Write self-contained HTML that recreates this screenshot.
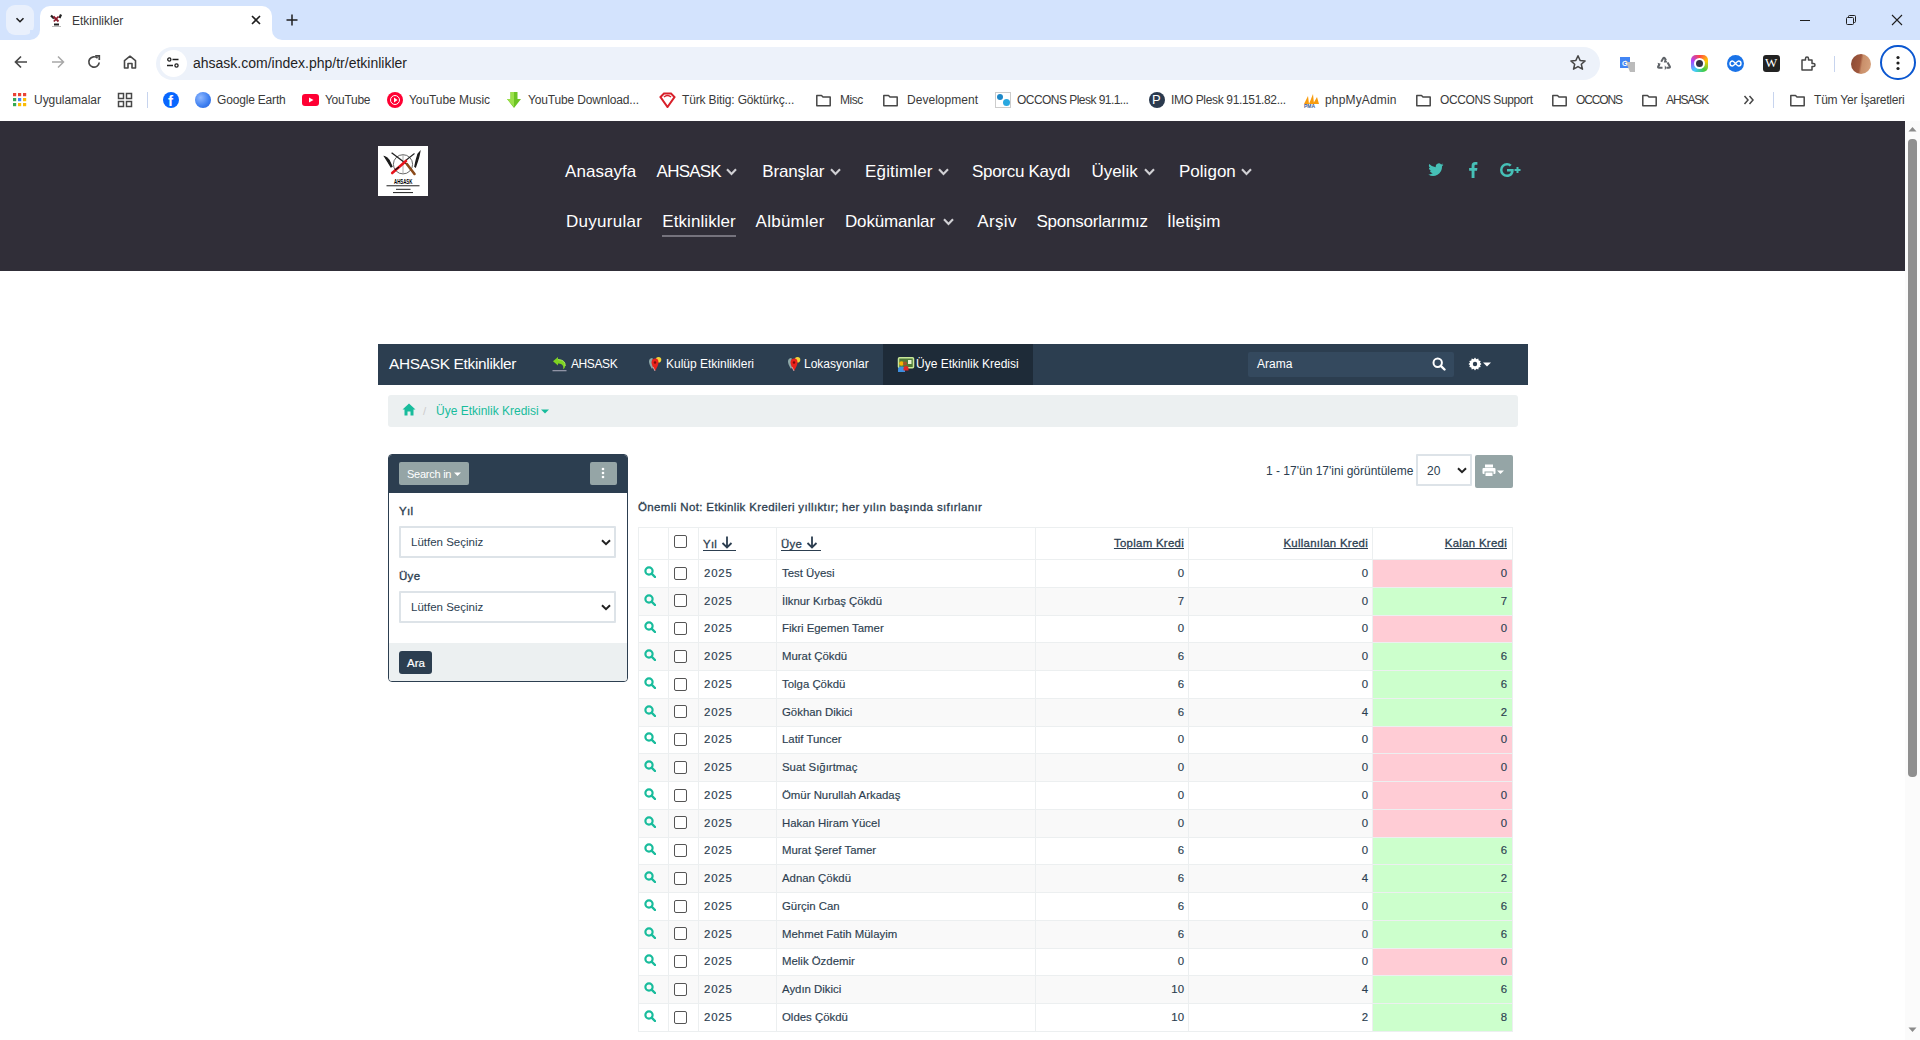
<!DOCTYPE html>
<html><head><meta charset="utf-8"><style>
*{box-sizing:border-box;margin:0;padding:0}
html,body{width:1920px;height:1040px;overflow:hidden;background:#fff;font-family:"Liberation Sans",sans-serif}
.abs{position:absolute}
#tabs{position:absolute;left:0;top:0;width:1920px;height:40px;background:#d3e3fd}
#toolbar{position:absolute;left:0;top:40px;width:1920px;height:40px;background:#fff;border-top-left-radius:8px}
#bm{position:absolute;left:0;top:80px;width:1920px;height:41px;background:#fff}
#page{position:absolute;left:0;top:121px;width:1905px;height:919px;background:#fff;overflow:hidden;color:#2c3e50}
#sb{position:absolute;left:1905px;top:121px;width:15px;height:919px;background:#fbfbfb}
.t12{font-size:12px;color:#3a3a3a;white-space:nowrap;line-height:14px}
#hdr{position:absolute;left:0;top:0;width:1905px;height:150px;background:#302e38}
.nav{position:absolute;color:#fff;font-size:17px;white-space:nowrap;line-height:20px}
.chev{position:absolute}
.w{position:absolute;white-space:nowrap}
#enav{position:absolute;left:378px;top:223px;width:1150px;height:41px;background:#2c3e50}
#bc{position:absolute;left:388px;top:274px;width:1130px;height:32px;background:#ecf0f1;border-radius:3px}
#panel{position:absolute;left:388px;top:333px;width:240px;height:228px;border:1px solid #2c3e50;border-radius:4px;overflow:hidden;background:#fff}
.btng{position:absolute;background:#95a5a6;border-radius:2px;color:#fff}
.sel{position:absolute;border:2px solid #dde3e8;border-radius:1px;background:#fff;font-size:11.5px;color:#2c3e50}
table{position:absolute;left:638px;top:406px;width:874px;border-collapse:collapse;font-size:11.4px;color:#2c3e50}
td,th{border:1px solid #eceff0;height:27.75px;padding:0 4px 1px 4px;white-space:nowrap}
th{height:32px;font-weight:normal;-webkit-text-stroke:0.3px #2c3e50;letter-spacing:0.3px;text-decoration:underline;text-align:left}
tr.even td{background:#f9f9f9}
td.c4,td.c5,td.c6,th.c4,th.c5,th.c6{text-align:right}
td.pink{background:#ffccd5 !important}
td.green{background:#ccffcc !important}
.cb{display:inline-block;width:13px;height:13px;margin-left:1px;border:1px solid #555;border-radius:2px;vertical-align:middle;background:#fff}

.ul{display:inline-block;text-decoration:none;border-bottom:1px solid #2c3e50;line-height:13px;height:15px;padding-right:3px}
td.c2{letter-spacing:0.8px}
td{-webkit-text-stroke:0.15px #2c3e50}
td.c2,td.c3{padding-left:5px}
td.c0{padding-left:5px}
td.c6,th.c6{padding-right:5px}

</style></head><body>
<div id="tabs">
  <div class="abs" style="left:6px;top:5px;width:28px;height:30px;border-radius:9px;background:#e9f0fc"></div>
  <svg class="abs" style="left:14px;top:14px" width="12" height="12" viewBox="0 0 12 12"><path d="M2.5 4.2L6 7.7L9.5 4.2" stroke="#1f1f1f" stroke-width="1.6" fill="none"/></svg>
  <div class="abs" style="left:40px;top:6px;width:232px;height:34px;background:#fff;border-radius:10px 10px 0 0"></div>
  <div class="abs" style="left:30px;top:30px;width:10px;height:10px;background:#fff"></div>
  <div class="abs" style="left:30px;top:30px;width:10px;height:10px;background:#d3e3fd;border-radius:0 0 10px 0"></div>
  <div class="abs" style="left:272px;top:30px;width:10px;height:10px;background:#fff"></div>
  <div class="abs" style="left:272px;top:30px;width:10px;height:10px;background:#d3e3fd;border-radius:0 0 0 10px"></div>
  <svg class="abs" style="left:49px;top:13px" width="14" height="14" viewBox="0 0 14 14"><path d="M2 2.5L5 5.5M12 1.5L10.5 5" stroke="#222" stroke-width="2.2"/><path d="M4.5 3.5L9.5 8.5M9.5 3.5L4.8 8.5" stroke="#8b1a2a" stroke-width="1.8"/><rect x="5" y="10.5" width="5" height="2" fill="#222"/><rect x="3" y="13" width="9" height="1" fill="#bbb"/></svg>
  <div class="abs t12" style="left:72px;top:14px">Etkinlikler</div>
  <svg class="abs" style="left:250px;top:14px" width="12" height="12" viewBox="0 0 12 12"><path d="M2 2L10 10M10 2L2 10" stroke="#1f1f1f" stroke-width="1.6"/></svg>
  <svg class="abs" style="left:285px;top:13px" width="14" height="14" viewBox="0 0 14 14"><path d="M7 1.5V12.5M1.5 7H12.5" stroke="#1f1f1f" stroke-width="1.5"/></svg>
  <svg class="abs" style="left:1799px;top:14px" width="12" height="12" viewBox="0 0 12 12"><path d="M1 6.5H11" stroke="#1f1f1f" stroke-width="1"/></svg>
  <svg class="abs" style="left:1845px;top:14px" width="12" height="12" viewBox="0 0 12 12"><rect x="1.5" y="3.5" width="7" height="7" rx="1" fill="none" stroke="#1f1f1f" stroke-width="1"/><path d="M3.5 3.5V2.5a1 1 0 0 1 1-1h5a1 1 0 0 1 1 1v5a1 1 0 0 1-1 1h-1" fill="none" stroke="#1f1f1f" stroke-width="1"/></svg>
  <svg class="abs" style="left:1891px;top:14px" width="12" height="12" viewBox="0 0 12 12"><path d="M1 1L11 11M11 1L1 11" stroke="#1f1f1f" stroke-width="1.1"/></svg>
</div>
<div id="toolbar">
  <svg class="abs" style="left:13px;top:14px" width="16" height="16" viewBox="0 0 16 16"><path d="M14 8H2.5M8 2.5L2.5 8L8 13.5" stroke="#474747" stroke-width="1.7" fill="none"/></svg>
  <svg class="abs" style="left:50px;top:14px" width="16" height="16" viewBox="0 0 16 16"><path d="M2 8H13.5M8 2.5L13.5 8L8 13.5" stroke="#a8a8a8" stroke-width="1.5" fill="none"/></svg>
  <svg class="abs" style="left:86px;top:14px" width="16" height="16" viewBox="0 0 16 16"><path d="M13.2 8.5A5.2 5.2 0 1 1 11.6 4.2" stroke="#474747" stroke-width="1.7" fill="none"/><path d="M9.2 1.8H13.3V5.9" stroke="#474747" stroke-width="1.7" fill="none"/></svg>
  <svg class="abs" style="left:122px;top:14px" width="16" height="16" viewBox="0 0 16 16"><path d="M2.5 14V6.6L8 2.2L13.5 6.6V14H10V9.5H6V14Z" stroke="#474747" stroke-width="1.6" fill="none" stroke-linejoin="round"/></svg>
  <div class="abs" style="left:156px;top:7px;width:1444px;height:33px;border-radius:17px;background:#edf2fa"></div>
  <div class="abs" style="left:160px;top:10px;width:27px;height:27px;border-radius:14px;background:#fff"></div>
  <svg class="abs" style="left:166px;top:16px" width="14" height="14" viewBox="0 0 14 14"><circle cx="3.3" cy="3.5" r="1.6" fill="none" stroke="#1f1f1f" stroke-width="1.3"/><path d="M6.5 3.5H12.5M1 9.5H7" stroke="#1f1f1f" stroke-width="1.4"/><circle cx="10.5" cy="9.5" r="1.6" fill="none" stroke="#1f1f1f" stroke-width="1.3"/></svg>
  <div class="abs" style="left:193px;top:15px;font-size:14px;color:#1f1f1f">ahsask.com/index.php/tr/etkinlikler</div>
  <svg class="abs" style="left:1569px;top:14px" width="18" height="18" viewBox="0 0 18 18"><path d="M9 1.8L11.1 6.4L16.1 6.9L12.3 10.2L13.5 15.2L9 12.6L4.5 15.2L5.7 10.2L1.9 6.9L6.9 6.4Z" fill="none" stroke="#474747" stroke-width="1.5" stroke-linejoin="round"/></svg>
  <svg class="abs" style="left:1619px;top:16px" width="17" height="17" viewBox="0 0 17 17"><rect x="1" y="1" width="10" height="11" fill="#4285f4"/><path d="M6 4L11 16H16V6H9" fill="#bbb"/><text x="3" y="9.5" font-size="7" fill="#fff" font-family="Liberation Sans" font-weight="bold">G</text></svg>
  <svg class="abs" style="left:1655px;top:15px" width="18" height="18" viewBox="0 0 18 18"><path d="M6.2 6.8L8.2 3.3Q9 2 9.8 3.3L11 5.3M12.6 7.6L14.8 11.4Q15.4 12.8 13.9 12.8H11.5M7.5 12.8H4.1Q2.6 12.8 3.2 11.4L4.3 9.5" stroke="#5f6368" stroke-width="2" fill="none"/><path d="M10 3.5L12.6 7.6L8.8 7.4ZM9.8 15.3L11.5 12.8L9.8 10.3ZM2.6 7.8L5.7 8.8L3.8 12Z" fill="#5f6368"/></svg>
  <div class="abs" style="left:1691px;top:56px"></div>
  <div class="abs" style="left:1691px;top:15px;width:17px;height:17px;border-radius:5px;background:conic-gradient(#f44,#fc0,#4c4,#4cf,#a4f,#f44)"></div>
  <div class="abs" style="left:1694px;top:18px;width:11px;height:11px;border-radius:6px;background:#fff"></div>
  <div class="abs" style="left:1696px;top:20px;width:7px;height:7px;border-radius:4px;background:#334"></div>
  <div class="abs" style="left:1727px;top:15px;width:17px;height:17px;border-radius:9px;background:#1a73e8"></div>
  <svg class="abs" style="left:1729px;top:18px" width="13" height="11" viewBox="0 0 13 11"><path d="M3.5 3A2.5 2.5 0 1 0 3.5 8C5 8 8 3 9.5 3A2.5 2.5 0 1 1 9.5 8C8 8 5 3 3.5 3Z" fill="none" stroke="#fff" stroke-width="1.4"/></svg>
  <div class="abs" style="left:1763px;top:15px;width:17px;height:17px;border-radius:3px;background:#222"></div>
  <div class="abs" style="left:1765px;top:15px;font-size:13px;color:#fff;font-family:'Liberation Serif',serif">W</div>
  <svg class="abs" style="left:1799px;top:15px" width="18" height="18" viewBox="0 0 18 18"><path d="M3 5H6.5V3.5a1.5 1.5 0 0 1 3 0V5H13V8.5h1.5a1.5 1.5 0 0 1 0 3H13V15H3Z" fill="none" stroke="#474747" stroke-width="1.5" stroke-linejoin="round"/></svg>
  <div class="abs" style="left:1834px;top:16px;width:1px;height:16px;background:#c7d4ee"></div>
  <div class="abs" style="left:1851px;top:14px;width:20px;height:20px;border-radius:10px;background:linear-gradient(100deg,#8a4a35 0%,#a0583d 45%,#c98f6a 55%,#d8a47f 100%)"></div>
  <div class="abs" style="left:1880px;top:5px;width:36px;height:35px;border-radius:18px;border:2px solid #0b57d0"></div>
  <svg class="abs" style="left:1894px;top:14px" width="8" height="18" viewBox="0 0 8 18"><circle cx="4" cy="3.5" r="1.6" fill="#1f1f1f"/><circle cx="4" cy="9" r="1.6" fill="#1f1f1f"/><circle cx="4" cy="14.5" r="1.6" fill="#1f1f1f"/></svg>
</div>
<div id="bm">
<svg class="abs" style="left:12px;top:12px" width="16" height="16" viewBox="0 0 16 16"><rect x="1" y="1" width="3.2" height="3.2" fill="#ea4335"/><rect x="6" y="1" width="3.2" height="3.2" fill="#ea4335"/><rect x="11" y="1" width="3.2" height="3.2" fill="#ea4335"/><rect x="1" y="6" width="3.2" height="3.2" fill="#34a853"/><rect x="6" y="6" width="3.2" height="3.2" fill="#4285f4"/><rect x="11" y="6" width="3.2" height="3.2" fill="#fbbc05"/><rect x="1" y="11" width="3.2" height="3.2" fill="#34a853"/><rect x="6" y="11" width="3.2" height="3.2" fill="#fbbc05"/><rect x="11" y="11" width="3.2" height="3.2" fill="#fbbc05"/></svg>
<div class="abs t12" style="left:34.0px;top:13px;letter-spacing:-0.04px">Uygulamalar</div>
<svg class="abs" style="left:117px;top:12px" width="16" height="16" viewBox="0 0 16 16"><rect x="1.5" y="1.5" width="5" height="5" fill="none" stroke="#474747" stroke-width="1.5"/><rect x="9.5" y="1.5" width="5" height="5" fill="none" stroke="#474747" stroke-width="1.5"/><rect x="1.5" y="9.5" width="5" height="5" fill="none" stroke="#474747" stroke-width="1.5"/><rect x="9.5" y="9.5" width="5" height="5" fill="none" stroke="#474747" stroke-width="1.5"/></svg>
<div class="abs" style="left:147px;top:12px;width:1px;height:16px;background:#c7d4ee"></div>
<div class="abs" style="left:163px;top:12px;width:16px;height:16px;border-radius:8px;background:#0866ff"></div><div class="abs" style="left:168px;top:12px;font-size:15px;font-weight:bold;color:#fff;line-height:18px">f</div>
<div class="abs" style="left:195px;top:12px;width:16px;height:16px;border-radius:8px;background:radial-gradient(circle at 35% 35%,#8fb8ff,#3b7df0 60%,#2a5fd0)"></div>
<div class="abs t12" style="left:217.0px;top:13px;letter-spacing:-0.177px">Google Earth</div>
<div class="abs" style="left:302px;top:14px;width:17px;height:12px;border-radius:3px;background:#ff0033"></div><svg class="abs" style="left:302px;top:14px" width="17" height="12"><path d="M7 3.5L11.5 6L7 8.5Z" fill="#fff"/></svg>
<div class="abs t12" style="left:325.0px;top:13px;letter-spacing:-0.283px">YouTube</div>
<div class="abs" style="left:387px;top:12px;width:16px;height:16px;border-radius:8px;background:#ff0033"></div><div class="abs" style="left:390px;top:15px;width:10px;height:10px;border-radius:5px;border:1.3px solid #fff"></div><svg class="abs" style="left:387px;top:12px" width="16" height="16"><path d="M7 5.5L10.5 8L7 10.5Z" fill="#fff"/></svg>
<div class="abs t12" style="left:409.0px;top:13px;letter-spacing:-0.067px">YouTube Music</div>
<svg class="abs" style="left:506px;top:11px" width="16" height="18" viewBox="0 0 16 18"><path d="M4.5 1H11.5V8H15L8 17L1 8H4.5Z" fill="#6cc424"/><path d="M4.5 1H8V16L1 8H4.5Z" fill="#9be04a"/></svg>
<div class="abs t12" style="left:528.0px;top:13px;letter-spacing:-0.161px">YouTube Download...</div>
<svg class="abs" style="left:659px;top:12px" width="17" height="16" viewBox="0 0 17 16"><path d="M1.5 5L5 1.5H12L15.5 5L8.5 15Z" fill="none" stroke="#d8202a" stroke-width="2"/><path d="M5 5Q8.5 2 12 5" stroke="#d8202a" stroke-width="1.6" fill="none"/></svg>
<div class="abs t12" style="left:682.0px;top:13px;letter-spacing:-0.143px">Türk Bitig: Göktürkç...</div>
<svg class="abs" style="left:815px;top:12px" width="17" height="17" viewBox="0 0 17 17"><path d="M1.8 3.5H6.5L8 5H15.2V13.8H1.8Z" fill="none" stroke="#474747" stroke-width="1.5" stroke-linejoin="round"/></svg>
<div class="abs t12" style="left:840.0px;top:13px;letter-spacing:-0.483px">Misc</div>
<svg class="abs" style="left:882px;top:12px" width="17" height="17" viewBox="0 0 17 17"><path d="M1.8 3.5H6.5L8 5H15.2V13.8H1.8Z" fill="none" stroke="#474747" stroke-width="1.5" stroke-linejoin="round"/></svg>
<div class="abs t12" style="left:907.0px;top:13px;letter-spacing:0.03px">Development</div>
<div class="abs" style="left:995px;top:12px;width:16px;height:16px;border:1px solid #ccc;background:#fff"></div><div class="abs" style="left:997px;top:14px;width:6px;height:6px;border-radius:3px;background:#1e88c8"></div><div class="abs" style="left:1003px;top:19px;width:7px;height:7px;border-radius:4px;background:#29a8e0"></div>
<div class="abs t12" style="left:1017.0px;top:13px;letter-spacing:-0.539px">OCCONS Plesk 91.1...</div>
<div class="abs" style="left:1149px;top:12px;width:16px;height:16px;border-radius:8px;background:#2b3a4e"></div><div class="abs" style="left:1152px;top:12px;font-size:13px;color:#fff;line-height:16px">P</div>
<div class="abs t12" style="left:1171.0px;top:13px;letter-spacing:-0.338px">IMO Plesk 91.151.82...</div>
<svg class="abs" style="left:1303px;top:12px" width="17" height="16" viewBox="0 0 17 16"><path d="M1 12L5 4L6 12ZM6 12L10 2L11 12ZM10 12L14 5L16 12Z" fill="#f89c0e"/><text x="1" y="15.5" font-size="5" fill="#3a5b9a" font-weight="bold" font-family="Liberation Sans">PMA</text></svg>
<div class="abs t12" style="left:1325.0px;top:13px;letter-spacing:0.167px">phpMyAdmin</div>
<svg class="abs" style="left:1415px;top:12px" width="17" height="17" viewBox="0 0 17 17"><path d="M1.8 3.5H6.5L8 5H15.2V13.8H1.8Z" fill="none" stroke="#474747" stroke-width="1.5" stroke-linejoin="round"/></svg>
<div class="abs t12" style="left:1440.0px;top:13px;letter-spacing:-0.385px">OCCONS Support</div>
<svg class="abs" style="left:1551px;top:12px" width="17" height="17" viewBox="0 0 17 17"><path d="M1.8 3.5H6.5L8 5H15.2V13.8H1.8Z" fill="none" stroke="#474747" stroke-width="1.5" stroke-linejoin="round"/></svg>
<div class="abs t12" style="left:1576.0px;top:13px;letter-spacing:-1.14px">OCCONS</div>
<svg class="abs" style="left:1641px;top:12px" width="17" height="17" viewBox="0 0 17 17"><path d="M1.8 3.5H6.5L8 5H15.2V13.8H1.8Z" fill="none" stroke="#474747" stroke-width="1.5" stroke-linejoin="round"/></svg>
<div class="abs t12" style="left:1666.0px;top:13px;letter-spacing:-1.09px">AHSASK</div>
<svg class="abs" style="left:1743px;top:14px" width="12" height="12" viewBox="0 0 12 12"><path d="M1.5 2L5 6L1.5 10M6.5 2L10 6L6.5 10" stroke="#474747" stroke-width="1.5" fill="none"/></svg>
<div class="abs" style="left:1773px;top:12px;width:1px;height:16px;background:#c7d4ee"></div>
<svg class="abs" style="left:1789px;top:12px" width="17" height="17" viewBox="0 0 17 17"><path d="M1.8 3.5H6.5L8 5H15.2V13.8H1.8Z" fill="none" stroke="#474747" stroke-width="1.5" stroke-linejoin="round"/></svg>
<div class="abs t12" style="left:1814.0px;top:13px;letter-spacing:-0.191px">Tüm Yer İşaretleri</div>
</div>

<div id="page">
<div id="hdr">
  <div class="abs" style="left:378px;top:25px;width:50px;height:50px;background:#fff">
    <svg width="50" height="50" viewBox="0 0 50 50"><circle cx="25" cy="18.3" r="9.6" fill="none" stroke="#555" stroke-width="0.9"/><path d="M25 8.5V28" stroke="#999" stroke-width="0.8"/><path d="M6.5 10.5Q9 11 11 14L14 20.5L13 21Q10 16 6.5 10.5Z" fill="#1a1a1a" stroke="#1a1a1a" stroke-width="1.2"/><path d="M41.8 6Q41 11 39.5 15L37.5 21L36.8 20.5Q38 14 40 8Z" fill="#1a1a1a" stroke="#1a1a1a" stroke-width="1.2"/><path d="M13.6 6.8L29.5 18.8" stroke="#222" stroke-width="1.3"/><path d="M36.5 7.5L27 15" stroke="#222" stroke-width="1.1"/><path d="M29 18.2L36.5 28" stroke="#8b4a1a" stroke-width="2.6" stroke-linecap="round"/><path d="M28 15L14.2 27" stroke="#e8141c" stroke-width="2.6" stroke-linecap="round"/><path d="M21 21L17 24" stroke="#111" stroke-width="1.2"/><text x="16" y="37.5" font-family="Liberation Sans" font-weight="bold" font-size="7.8" fill="#000" textLength="18.4" lengthAdjust="spacingAndGlyphs">AHSASK</text><rect x="8.5" y="39.2" width="33" height="1.1" fill="#333"/><rect x="18" y="42.8" width="14.5" height="1.1" fill="#333"/><rect x="15" y="46" width="20" height="1.1" fill="#333"/></svg>
  </div>
  <div class="nav" style="left:565.0px;top:41px;letter-spacing:0.057px">Anasayfa</div>
<div class="nav" style="left:656.6px;top:41px;letter-spacing:-0.78px">AHSASK</div>
<div class="nav" style="left:762.3px;top:41px;letter-spacing:-0.171px">Branşlar</div>
<div class="nav" style="left:865.0px;top:41px;letter-spacing:0.175px">Eğitimler</div>
<div class="nav" style="left:972.0px;top:41px;letter-spacing:-0.3px">Sporcu Kaydı</div>
<div class="nav" style="left:1091.4px;top:41px;letter-spacing:0.0px">Üyelik</div>
<div class="nav" style="left:1179.0px;top:41px;letter-spacing:0.017px">Poligon</div>
<div class="nav" style="left:566.0px;top:91px;letter-spacing:0.287px">Duyurular</div>
<div class="nav" style="left:662.3px;top:91px;letter-spacing:0.07px">Etkinlikler</div>
<div class="nav" style="left:755.6px;top:91px;letter-spacing:0.243px">Albümler</div>
<div class="nav" style="left:845.0px;top:91px;letter-spacing:-0.178px">Dokümanlar</div>
<div class="nav" style="left:977.3px;top:91px;letter-spacing:0.35px">Arşiv</div>
<div class="nav" style="left:1036.4px;top:91px;letter-spacing:-0.208px">Sponsorlarımız</div>
<div class="nav" style="left:1167.0px;top:91px;letter-spacing:0.057px">İletişim</div>
  <div class="abs" style="left:662px;top:114px;width:74px;height:2px;background:#75737d"></div>
  <svg class="abs" style="left:726px;top:47px" width="11" height="8" viewBox="0 0 11 8"><path d="M1 1.2L5.5 6L10 1.2" stroke="#d0d0d4" stroke-width="2.1" fill="none"/></svg>
<svg class="abs" style="left:830px;top:47px" width="11" height="8" viewBox="0 0 11 8"><path d="M1 1.2L5.5 6L10 1.2" stroke="#d0d0d4" stroke-width="2.1" fill="none"/></svg>
<svg class="abs" style="left:938px;top:47px" width="11" height="8" viewBox="0 0 11 8"><path d="M1 1.2L5.5 6L10 1.2" stroke="#d0d0d4" stroke-width="2.1" fill="none"/></svg>
<svg class="abs" style="left:1144px;top:47px" width="11" height="8" viewBox="0 0 11 8"><path d="M1 1.2L5.5 6L10 1.2" stroke="#d0d0d4" stroke-width="2.1" fill="none"/></svg>
<svg class="abs" style="left:1241px;top:47px" width="11" height="8" viewBox="0 0 11 8"><path d="M1 1.2L5.5 6L10 1.2" stroke="#d0d0d4" stroke-width="2.1" fill="none"/></svg>
<svg class="abs" style="left:943px;top:97px" width="11" height="8" viewBox="0 0 11 8"><path d="M1 1.2L5.5 6L10 1.2" stroke="#d0d0d4" stroke-width="2.1" fill="none"/></svg>
  <svg class="abs" style="left:1428px;top:42px" width="16" height="14" viewBox="0 0 16 14"><path d="M15.5 1.8c-.6.3-1.2.4-1.8.5.7-.4 1.1-1 1.4-1.7-.6.4-1.3.6-2 .8A3.1 3.1 0 0 0 7.8 4.2 8.9 8.9 0 0 1 1.3 1c-.8 1.4-.4 3.2 1 4.1-.5 0-1-.2-1.4-.4 0 1.5 1.1 2.8 2.5 3.1-.5.1-.9.2-1.4.1.4 1.3 1.6 2.2 2.9 2.2A6.3 6.3 0 0 1 .3 11.4 8.9 8.9 0 0 0 14 3.6V3.2c.6-.4 1.1-.9 1.5-1.4z" fill="#46c0b7"/></svg>
  <svg class="abs" style="left:1468px;top:41px" width="10" height="16" viewBox="0 0 10 16"><path d="M6.5 16V8.7H9l.4-2.8H6.5V4.1c0-.8.2-1.4 1.4-1.4h1.5V.1A20 20 0 0 0 7.2 0C5 0 3.6 1.3 3.6 3.7v2.2H1.1v2.8h2.5V16z" fill="#46c0b7"/></svg>
  <svg class="abs" style="left:1500px;top:42px" width="22" height="14" viewBox="0 0 22 14"><path d="M7 6V8.4H11C10.8 9.5 9.7 11.5 7 11.5A4.5 4.5 0 0 1 7 2.5C8.4 2.5 9.3 3.1 9.8 3.6L11.7 1.8A7 7 0 0 0 7 0a7 7 0 0 0 0 14c4 0 6.7-2.8 6.7-6.8 0-.5 0-.8-.1-1.2z" fill="#46c0b7"/><path d="M18.5 4V6H20.5V8H18.5V10H16.5V8H14.5V6H16.5V4Z" fill="#46c0b7"/></svg>
</div>

<div id="enav">
  <div class="w" style="left:11px;top:10.5px;font-size:15.4px;color:#fff;line-height:18px;letter-spacing:-0.3px">AHSASK Etkinlikler</div>
  <svg class="abs" style="left:174px;top:12px" width="16" height="16" viewBox="0 0 16 16"><path d="M1 5.2L6 1V3.6Q13.5 3.8 13.2 10Q13 12.5 11 13.2Q12 9.8 9.5 8.2Q8 7.3 6 7.4V9.6Z" fill="#7ed321"/><path d="M6 3.6Q13.5 3.8 13.2 10" stroke="#a8ec5a" stroke-width="1" fill="none"/><rect x="0.5" y="14" width="14" height="1.3" fill="#aab" opacity="0.8"/></svg>
  <div class="w" style="left:193px;top:13px;font-size:12px;color:#fff;line-height:14px;letter-spacing:-0.4px">AHSASK</div>
  <svg class="abs" style="left:270px;top:12px" width="14" height="16" viewBox="0 0 14 16"><path d="M4.5 2Q1 2 1 5.5Q1 8 4 13L5.5 10Z" fill="#8fa9a8"/><circle cx="10.5" cy="3.8" r="2.8" fill="#f3d23a"/><path d="M7.5 2.5Q3.5 2.5 3.5 6.5Q3.5 9 7 15Q10.5 9 10.5 6.5Q10.5 2.5 7.5 2.5Z" fill="#e8231c"/><circle cx="7" cy="6.5" r="1.2" fill="#7a0a08"/><path d="M5 11L7 15" stroke="#fff" stroke-width="0.8" opacity="0.7"/></svg>
  <div class="w" style="left:288px;top:13px;font-size:12px;color:#fff;line-height:14px">Kulüp Etkinlikleri</div>
  <svg class="abs" style="left:409px;top:12px" width="14" height="16" viewBox="0 0 14 16"><path d="M4.5 2Q1 2 1 5.5Q1 8 4 13L5.5 10Z" fill="#8fa9a8"/><circle cx="10.5" cy="3.8" r="2.8" fill="#f3d23a"/><path d="M7.5 2.5Q3.5 2.5 3.5 6.5Q3.5 9 7 15Q10.5 9 10.5 6.5Q10.5 2.5 7.5 2.5Z" fill="#e8231c"/><circle cx="7" cy="6.5" r="1.2" fill="#7a0a08"/><path d="M5 11L7 15" stroke="#fff" stroke-width="0.8" opacity="0.7"/></svg>
  <div class="w" style="left:426px;top:13px;font-size:12px;color:#fff;line-height:14px">Lokasyonlar</div>
  <div class="abs" style="left:505px;top:0;width:150px;height:41px;background:#1e2b38"></div>
  <svg class="abs" style="left:519px;top:13px" width="18" height="16" viewBox="0 0 18 16"><rect x="1.5" y="0.8" width="15" height="10" rx="1" fill="#4f7a3a" stroke="#c9e89a" stroke-width="1.5"/><rect x="11" y="3" width="3.5" height="4" fill="#e6f3cf"/><circle cx="4.5" cy="6.5" r="2.3" fill="#f4b400"/><circle cx="8" cy="6.5" r="2" fill="#a0522d"/><path d="M1 15V12.2Q1 9.5 4.5 9.5Q8 9.5 8 12.2V15Z" fill="#3d8fe0"/><path d="M6.5 13.5V11Q6.5 9 9 9Q11.5 9 11.5 11V13.5Z" fill="#e02424"/></svg>
  <div class="w" style="left:538px;top:13px;font-size:12px;color:#fff;line-height:14px">Üye Etkinlik Kredisi</div>
  <div class="abs" style="left:870px;top:8px;width:206px;height:25px;background:#34495e;border-radius:2px"></div>
  <div class="w" style="left:879px;top:13px;font-size:12px;color:#fff;line-height:14px">Arama</div>
  <svg class="abs" style="left:1054px;top:13px" width="14" height="14" viewBox="0 0 14 14"><circle cx="5.7" cy="5.7" r="4.2" fill="none" stroke="#fff" stroke-width="2"/><path d="M8.8 8.8L12.5 12.5" stroke="#fff" stroke-width="2.4" stroke-linecap="round"/></svg>
  <svg class="abs" style="left:1090px;top:13px" width="14" height="14" viewBox="0 0 14 14"><path d="M7 0.5L8.3 2.2L10.3 1.4L10.7 3.4L12.7 3.9L12 5.8L13.5 7L12 8.2L12.7 10.1L10.7 10.6L10.3 12.6L8.3 11.8L7 13.5L5.7 11.8L3.7 12.6L3.3 10.6L1.3 10.1L2 8.2L0.5 7L2 5.8L1.3 3.9L3.3 3.4L3.7 1.4L5.7 2.2Z" fill="#fff"/><circle cx="7" cy="7" r="2.2" fill="#2c3e50"/></svg>
  <svg class="abs" style="left:1105px;top:18px" width="8" height="5"><path d="M0 0.5H8L4 4.5Z" fill="#fff"/></svg>
</div>

<div id="bc">
  <svg class="abs" style="left:14px;top:8px" width="14" height="13" viewBox="0 0 14 13"><path d="M7 0.5L0.5 6.5H2.5V12.5H5.5V8.5H8.5V12.5H11.5V6.5H13.5Z" fill="#18bc9c"/></svg>
  <div class="w" style="left:35px;top:9px;font-size:11.5px;color:#ccc;line-height:14px">/</div>
  <div class="w" style="left:48px;top:9px;font-size:12px;color:#18bc9c;line-height:14px">Üye Etkinlik Kredisi</div>
  <svg class="abs" style="left:153px;top:14px" width="8" height="5"><path d="M0 0.5H8L4 4.5Z" fill="#18bc9c"/></svg>
</div>

<div id="panel">
  <div class="abs" style="left:0;top:0;width:238px;height:38px;background:#2c3e50"></div>
  <div class="btng" style="left:10px;top:7px;width:70px;height:23px"></div>
  <div class="w" style="left:18px;top:12px;font-size:11px;color:#fff;line-height:14px;letter-spacing:-0.25px">Search in</div>
  <svg class="abs" style="left:65px;top:17px" width="8" height="5"><path d="M0 0.5H7L3.5 4Z" fill="#fff"/></svg>
  <div class="btng" style="left:201px;top:7px;width:27px;height:23px"></div>
  <svg class="abs" style="left:212px;top:12px" width="4" height="12"><circle cx="2" cy="2" r="1.3" fill="#fff"/><circle cx="2" cy="6" r="1.3" fill="#fff"/><circle cx="2" cy="10" r="1.3" fill="#fff"/></svg>
  <div class="w" style="left:10px;top:49px;font-size:11.5px;-webkit-text-stroke:0.35px #2c3e50;letter-spacing:0.3px;color:#2c3e50;line-height:14px">Yıl</div>
  <div class="sel" style="left:10px;top:71px;width:217px;height:32px"></div>
  <div class="w" style="left:22px;top:80px;font-size:11.5px;color:#2c3e50;line-height:14px">Lütfen Seçiniz</div>
  <svg class="abs" style="left:212px;top:84px" width="10" height="7" viewBox="0 0 10 7"><path d="M1 1.2L5 5.2L9 1.2" stroke="#222" stroke-width="2" fill="none"/></svg>
  <div class="w" style="left:10px;top:114px;font-size:11.5px;-webkit-text-stroke:0.35px #2c3e50;letter-spacing:0.3px;color:#2c3e50;line-height:14px">Üye</div>
  <div class="sel" style="left:10px;top:136px;width:217px;height:32px"></div>
  <div class="w" style="left:22px;top:145px;font-size:11.5px;color:#2c3e50;line-height:14px">Lütfen Seçiniz</div>
  <svg class="abs" style="left:212px;top:149px" width="10" height="7" viewBox="0 0 10 7"><path d="M1 1.2L5 5.2L9 1.2" stroke="#222" stroke-width="2" fill="none"/></svg>
  <div class="abs" style="left:0;top:188px;width:238px;height:40px;background:#ecf0f1"></div>
  <div class="abs" style="left:10px;top:196px;width:33px;height:23px;background:#2c3e50;border-radius:3px"></div>
  <div class="w" style="left:18px;top:201px;font-size:11.5px;color:#fff;line-height:14px;-webkit-text-stroke:0.2px #fff">Ara</div>
</div>

<div class="w" style="left:1266px;top:343px;font-size:12px;color:#2c3e50;line-height:14px">1 - 17'ün 17'ini görüntüleme</div>
<div class="sel" style="left:1416px;top:333px;width:56px;height:32px;border-width:2px"></div>
<div class="w" style="left:1427px;top:343px;font-size:12px;color:#2c3e50;line-height:14px">20</div>
<svg class="abs" style="left:1457px;top:346px" width="10" height="7" viewBox="0 0 10 7"><path d="M1 1.2L5 5.2L9 1.2" stroke="#222" stroke-width="2" fill="none"/></svg>
<div class="btng" style="left:1475px;top:334px;width:38px;height:33px"></div>
<svg class="abs" style="left:1482px;top:343px" width="14" height="13" viewBox="0 0 14 13"><rect x="3" y="0.5" width="8" height="3" fill="#fff"/><rect x="0.5" y="4" width="13" height="6" rx="1" fill="#fff"/><rect x="3" y="8" width="8" height="4.5" fill="#fff" stroke="#95a5a6" stroke-width="1"/></svg>
<svg class="abs" style="left:1497px;top:349px" width="8" height="5"><path d="M0 0.5H7L3.5 4Z" fill="#fff"/></svg>

<div class="w" style="left:638px;top:379px;font-size:11.5px;color:#2c3e50;line-height:14px;-webkit-text-stroke:0.3px #2c3e50;letter-spacing:0.37px">Önemli Not: Etkinlik Kredileri yıllıktır; her yılın başında sıfırlanır</div>

<table style="table-layout:fixed">
<colgroup><col style="width:30px"><col style="width:30px"><col style="width:78px"><col style="width:259px"><col style="width:153px"><col style="width:184px"><col style="width:140px"></colgroup>
<tr><th class="c0"></th><th class="c1"><span class="cb" style="margin-top:-4px"></span></th><th class="c2"><span class="ul">Yıl <svg width="12" height="13" viewBox="0 0 12 13" style="vertical-align:-1px"><path d="M6 0.5V11.5M1.5 7L6 11.5L10.5 7" stroke="#2c3e50" stroke-width="1.8" fill="none"/></svg></span></th><th class="c3"><span class="ul">Üye <svg width="12" height="13" viewBox="0 0 12 13" style="vertical-align:-1px"><path d="M6 0.5V11.5M1.5 7L6 11.5L10.5 7" stroke="#2c3e50" stroke-width="1.8" fill="none"/></svg></span></th><th class="c4">Toplam Kredi</th><th class="c5">Kullanılan Kredi</th><th class="c6">Kalan Kredi</th></tr>
<tr class="odd"><td class="c0"><svg width="12" height="12" viewBox="0 0 12 12"><circle cx="5" cy="5" r="3.6" fill="none" stroke="#18bc9c" stroke-width="2.2"/><path d="M7.6 7.6L11 11" stroke="#18bc9c" stroke-width="2.4" stroke-linecap="round"/></svg></td><td class="c1"><span class="cb"></span></td><td class="c2">2025</td><td class="c3">Test Üyesi</td><td class="c4">0</td><td class="c5">0</td><td class="c6 pink">0</td></tr>
<tr class="even"><td class="c0"><svg width="12" height="12" viewBox="0 0 12 12"><circle cx="5" cy="5" r="3.6" fill="none" stroke="#18bc9c" stroke-width="2.2"/><path d="M7.6 7.6L11 11" stroke="#18bc9c" stroke-width="2.4" stroke-linecap="round"/></svg></td><td class="c1"><span class="cb"></span></td><td class="c2">2025</td><td class="c3">İlknur Kırbaş Çökdü</td><td class="c4">7</td><td class="c5">0</td><td class="c6 green">7</td></tr>
<tr class="odd"><td class="c0"><svg width="12" height="12" viewBox="0 0 12 12"><circle cx="5" cy="5" r="3.6" fill="none" stroke="#18bc9c" stroke-width="2.2"/><path d="M7.6 7.6L11 11" stroke="#18bc9c" stroke-width="2.4" stroke-linecap="round"/></svg></td><td class="c1"><span class="cb"></span></td><td class="c2">2025</td><td class="c3">Fikri Egemen Tamer</td><td class="c4">0</td><td class="c5">0</td><td class="c6 pink">0</td></tr>
<tr class="even"><td class="c0"><svg width="12" height="12" viewBox="0 0 12 12"><circle cx="5" cy="5" r="3.6" fill="none" stroke="#18bc9c" stroke-width="2.2"/><path d="M7.6 7.6L11 11" stroke="#18bc9c" stroke-width="2.4" stroke-linecap="round"/></svg></td><td class="c1"><span class="cb"></span></td><td class="c2">2025</td><td class="c3">Murat Çökdü</td><td class="c4">6</td><td class="c5">0</td><td class="c6 green">6</td></tr>
<tr class="odd"><td class="c0"><svg width="12" height="12" viewBox="0 0 12 12"><circle cx="5" cy="5" r="3.6" fill="none" stroke="#18bc9c" stroke-width="2.2"/><path d="M7.6 7.6L11 11" stroke="#18bc9c" stroke-width="2.4" stroke-linecap="round"/></svg></td><td class="c1"><span class="cb"></span></td><td class="c2">2025</td><td class="c3">Tolga Çökdü</td><td class="c4">6</td><td class="c5">0</td><td class="c6 green">6</td></tr>
<tr class="even"><td class="c0"><svg width="12" height="12" viewBox="0 0 12 12"><circle cx="5" cy="5" r="3.6" fill="none" stroke="#18bc9c" stroke-width="2.2"/><path d="M7.6 7.6L11 11" stroke="#18bc9c" stroke-width="2.4" stroke-linecap="round"/></svg></td><td class="c1"><span class="cb"></span></td><td class="c2">2025</td><td class="c3">Gökhan Dikici</td><td class="c4">6</td><td class="c5">4</td><td class="c6 green">2</td></tr>
<tr class="odd"><td class="c0"><svg width="12" height="12" viewBox="0 0 12 12"><circle cx="5" cy="5" r="3.6" fill="none" stroke="#18bc9c" stroke-width="2.2"/><path d="M7.6 7.6L11 11" stroke="#18bc9c" stroke-width="2.4" stroke-linecap="round"/></svg></td><td class="c1"><span class="cb"></span></td><td class="c2">2025</td><td class="c3">Latif Tuncer</td><td class="c4">0</td><td class="c5">0</td><td class="c6 pink">0</td></tr>
<tr class="even"><td class="c0"><svg width="12" height="12" viewBox="0 0 12 12"><circle cx="5" cy="5" r="3.6" fill="none" stroke="#18bc9c" stroke-width="2.2"/><path d="M7.6 7.6L11 11" stroke="#18bc9c" stroke-width="2.4" stroke-linecap="round"/></svg></td><td class="c1"><span class="cb"></span></td><td class="c2">2025</td><td class="c3">Suat Sığırtmaç</td><td class="c4">0</td><td class="c5">0</td><td class="c6 pink">0</td></tr>
<tr class="odd"><td class="c0"><svg width="12" height="12" viewBox="0 0 12 12"><circle cx="5" cy="5" r="3.6" fill="none" stroke="#18bc9c" stroke-width="2.2"/><path d="M7.6 7.6L11 11" stroke="#18bc9c" stroke-width="2.4" stroke-linecap="round"/></svg></td><td class="c1"><span class="cb"></span></td><td class="c2">2025</td><td class="c3">Ömür Nurullah Arkadaş</td><td class="c4">0</td><td class="c5">0</td><td class="c6 pink">0</td></tr>
<tr class="even"><td class="c0"><svg width="12" height="12" viewBox="0 0 12 12"><circle cx="5" cy="5" r="3.6" fill="none" stroke="#18bc9c" stroke-width="2.2"/><path d="M7.6 7.6L11 11" stroke="#18bc9c" stroke-width="2.4" stroke-linecap="round"/></svg></td><td class="c1"><span class="cb"></span></td><td class="c2">2025</td><td class="c3">Hakan Hiram Yücel</td><td class="c4">0</td><td class="c5">0</td><td class="c6 pink">0</td></tr>
<tr class="odd"><td class="c0"><svg width="12" height="12" viewBox="0 0 12 12"><circle cx="5" cy="5" r="3.6" fill="none" stroke="#18bc9c" stroke-width="2.2"/><path d="M7.6 7.6L11 11" stroke="#18bc9c" stroke-width="2.4" stroke-linecap="round"/></svg></td><td class="c1"><span class="cb"></span></td><td class="c2">2025</td><td class="c3">Murat Şeref Tamer</td><td class="c4">6</td><td class="c5">0</td><td class="c6 green">6</td></tr>
<tr class="even"><td class="c0"><svg width="12" height="12" viewBox="0 0 12 12"><circle cx="5" cy="5" r="3.6" fill="none" stroke="#18bc9c" stroke-width="2.2"/><path d="M7.6 7.6L11 11" stroke="#18bc9c" stroke-width="2.4" stroke-linecap="round"/></svg></td><td class="c1"><span class="cb"></span></td><td class="c2">2025</td><td class="c3">Adnan Çökdü</td><td class="c4">6</td><td class="c5">4</td><td class="c6 green">2</td></tr>
<tr class="odd"><td class="c0"><svg width="12" height="12" viewBox="0 0 12 12"><circle cx="5" cy="5" r="3.6" fill="none" stroke="#18bc9c" stroke-width="2.2"/><path d="M7.6 7.6L11 11" stroke="#18bc9c" stroke-width="2.4" stroke-linecap="round"/></svg></td><td class="c1"><span class="cb"></span></td><td class="c2">2025</td><td class="c3">Gürçin Can</td><td class="c4">6</td><td class="c5">0</td><td class="c6 green">6</td></tr>
<tr class="even"><td class="c0"><svg width="12" height="12" viewBox="0 0 12 12"><circle cx="5" cy="5" r="3.6" fill="none" stroke="#18bc9c" stroke-width="2.2"/><path d="M7.6 7.6L11 11" stroke="#18bc9c" stroke-width="2.4" stroke-linecap="round"/></svg></td><td class="c1"><span class="cb"></span></td><td class="c2">2025</td><td class="c3">Mehmet Fatih Mülayim</td><td class="c4">6</td><td class="c5">0</td><td class="c6 green">6</td></tr>
<tr class="odd"><td class="c0"><svg width="12" height="12" viewBox="0 0 12 12"><circle cx="5" cy="5" r="3.6" fill="none" stroke="#18bc9c" stroke-width="2.2"/><path d="M7.6 7.6L11 11" stroke="#18bc9c" stroke-width="2.4" stroke-linecap="round"/></svg></td><td class="c1"><span class="cb"></span></td><td class="c2">2025</td><td class="c3">Melik Özdemir</td><td class="c4">0</td><td class="c5">0</td><td class="c6 pink">0</td></tr>
<tr class="even"><td class="c0"><svg width="12" height="12" viewBox="0 0 12 12"><circle cx="5" cy="5" r="3.6" fill="none" stroke="#18bc9c" stroke-width="2.2"/><path d="M7.6 7.6L11 11" stroke="#18bc9c" stroke-width="2.4" stroke-linecap="round"/></svg></td><td class="c1"><span class="cb"></span></td><td class="c2">2025</td><td class="c3">Aydın Dikici</td><td class="c4">10</td><td class="c5">4</td><td class="c6 green">6</td></tr>
<tr class="odd"><td class="c0"><svg width="12" height="12" viewBox="0 0 12 12"><circle cx="5" cy="5" r="3.6" fill="none" stroke="#18bc9c" stroke-width="2.2"/><path d="M7.6 7.6L11 11" stroke="#18bc9c" stroke-width="2.4" stroke-linecap="round"/></svg></td><td class="c1"><span class="cb"></span></td><td class="c2">2025</td><td class="c3">Oldes Çökdü</td><td class="c4">10</td><td class="c5">2</td><td class="c6 green">8</td></tr>
</table>

</div>
<div id="sb"><svg class="abs" style="left:3px;top:5px" width="9" height="6"><path d="M0.5 5.5L4.5 1L8.5 5.5Z" fill="#8a8a8a"/></svg><div class="abs" style="left:3px;top:18px;width:9px;height:638px;border-radius:4px;background:#8f8f8f"></div><svg class="abs" style="left:3px;top:906px" width="9" height="6"><path d="M0.5 0.5L4.5 5L8.5 0.5Z" fill="#8a8a8a"/></svg></div>
</body></html>
